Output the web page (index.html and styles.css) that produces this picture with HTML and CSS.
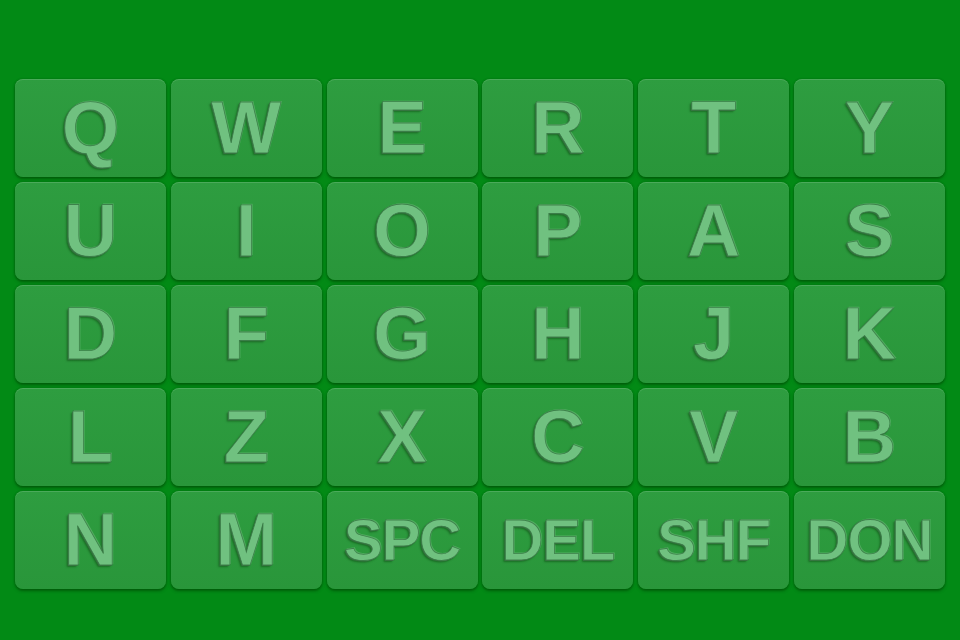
FILE: index.html
```
<!DOCTYPE html>
<html>
<head>
<meta charset="utf-8">
<link rel="stylesheet" href="styles.css">
</head>
<body>
<div class="board">
  <div class="key">Q</div><div class="key">W</div><div class="key">E</div><div class="key">R</div><div class="key">T</div><div class="key">Y</div>
  <div class="key">U</div><div class="key">I</div><div class="key">O</div><div class="key">P</div><div class="key">A</div><div class="key">S</div>
  <div class="key">D</div><div class="key">F</div><div class="key">G</div><div class="key">H</div><div class="key">J</div><div class="key">K</div>
  <div class="key">L</div><div class="key">Z</div><div class="key">X</div><div class="key">C</div><div class="key">V</div><div class="key">B</div>
  <div class="key">N</div><div class="key">M</div><div class="key wide">SPC</div><div class="key wide">DEL</div><div class="key wide">SHF</div><div class="key wide">DON</div>
</div>
</body>
</html>
```
FILE: styles.css
```
html, body {
  margin: 0;
  padding: 0;
  width: 960px;
  height: 640px;
  background: #028a15;
  overflow: hidden;
}
.board {
  padding: 79px 15px 0 15px;
  display: grid;
  grid-template-columns: repeat(6, 1fr);
  grid-template-rows: repeat(5, 98px);
  gap: 5px 4.8px;
}
.key {
  display: flex;
  align-items: center;
  justify-content: center;
  border-radius: 8px;
  background: linear-gradient(#2e9d40, #29963a);
  box-shadow: 0 2px 3px rgba(0, 60, 0, 0.55), 0 0 2px rgba(0, 60, 0, 0.35), inset 0 1px 0 rgba(255, 255, 255, 0.14);
  font-family: "Liberation Sans", Arial, sans-serif;
  font-weight: bold;
  font-size: 74px;
  color: #70c180;
  -webkit-text-stroke: 0.8px rgba(55, 120, 68, 0.85);
  text-shadow: -1px 1px 0 #35723f, -2px 2px 2px rgba(0, 45, 0, 0.4), 1px -1px 0 rgba(190, 235, 200, 0.25);
  line-height: 1;
}
.key.wide {
  font-size: 58px;
  letter-spacing: -1px;
}
```
